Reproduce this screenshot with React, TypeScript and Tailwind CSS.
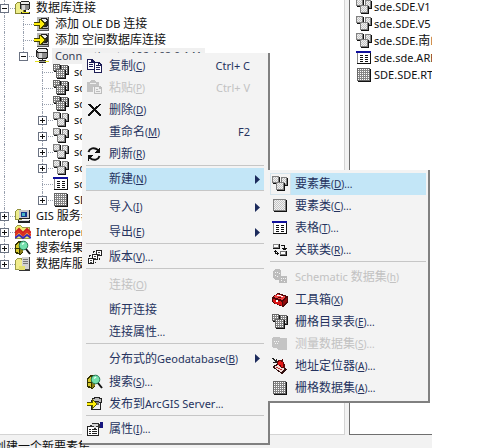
import type { ReactNode } from 'react';

/* ---------- icons ---------- */

function Svg({ children, size = 16 }: { children: ReactNode; size?: number }) {
  return (
    <svg width={size} height={16} viewBox={`0 0 ${size} 16`} shapeRendering="crispEdges" className="shrink-0" aria-hidden="true">
      {children}
    </svg>
  );
}

type TileProps = { x: number; y: number; w: number; h: number; kind: 'hatch' | 'grid' };

function Tile({ x, y, w, h, kind }: TileProps) {
  const dots: ReactNode[] = [];
  for (let r = 1; r < h - 1; r++) {
    for (let c = 1; c < w - 1; c++) {
      const on = kind === 'hatch' ? (r + c) % 2 === 0 : r % 2 === 1 && c % 2 === 1;
      if (on) dots.push(<rect key={`${r}-${c}`} x={x + c} y={y + r} width="1" height="1" fill={kind === 'hatch' ? '#c4c4c4' : '#ffffff'} />);
    }
  }
  return (
    <g>
      <rect x={x + 1} y={y + 1} width={w} height={h} fill="#111" />
      <rect x={x} y={y} width={w} height={h} fill={kind === 'hatch' ? '#808080' : '#666'} />
      <rect x={x + 1} y={y + 1} width={w - 2} height={h - 2} fill={kind === 'hatch' ? '#f1f1f1' : '#858585'} />
      {dots}
    </g>
  );
}

const DatasetIcon = () => (
  <Svg>
    <Tile x={0} y={0} w={7} h={7} kind="hatch" />
    <Tile x={9} y={1} w={6} h={8} kind="hatch" />
    <Tile x={4} y={6} w={8} h={8} kind="hatch" />
  </Svg>
);

const CatalogIcon = () => (
  <Svg>
    <Tile x={0} y={0} w={7} h={7} kind="grid" />
    <Tile x={8} y={1} w={7} h={9} kind="grid" />
    <Tile x={3} y={5} w={9} h={9} kind="grid" />
  </Svg>
);

const RasterIcon = () => (
  <Svg>
    <Tile x={1} y={1} w={13} h={13} kind="grid" />
  </Svg>
);

const FeatureClassIcon = () => (
  <Svg>
    <Tile x={1} y={1} w={13} h={12} kind="hatch" />
  </Svg>
);

const TableIcon = () => (
  <Svg>
    <rect x="1" y="2" width="14" height="12" fill="#111" />
    <rect x="1" y="2" width="13" height="11" fill="#fff" />
    <rect x="1" y="3" width="1" height="10" fill="#888" />
    <rect x="0" y="1" width="15" height="2" fill="#10109c" />
    <path d="M4 5h3v1H4zM4 7h3v1H4zM4 9h3v1H4zM4 11h3v1H4zM9 5h3v1H9zM9 7h3v1H9zM9 9h3v1H9zM9 11h3v1H9z" fill="#111" />
  </Svg>
);

const RelationIcon = () => (
  <Svg>
    <rect x="1" y="2" width="7" height="5" fill="#111" />
    <rect x="1" y="2" width="6" height="4" fill="#888" />
    <rect x="2" y="3" width="4" height="2" fill="#fff" />
    <rect x="8" y="9" width="7" height="5" fill="#111" />
    <rect x="8" y="9" width="6" height="4" fill="#777" />
    <rect x="9" y="10" width="4" height="2" fill="#fff" />
    <path d="M9 3h3v1H9zM12 3h1v4h-1zM10 6h5v1h-5zM11 7h3v1h-3zM3 8h1v4H3zM2 9h3v1H2zM3 11h4v1H3zM5 10h1v3H5z" fill="#111" />
  </Svg>
);

const CopyIcon = () => (
  <Svg>
    <path d="M0 1h5l3 3v8H0z" fill="#1d1d55" />
    <path d="M1 2h3v3h3v6H1z" fill="#fff" />
    <path d="M2 4h2v1H2zM2 6h4v1H2zM2 8h4v1H2z" fill="#1d1d55" />
    <path d="M7 4h5l3 3v8H7z" fill="#1d1d55" />
    <path d="M8 5h3v3h3v6H8zM12 6h1v1h-1z" fill="#fff" />
    <path d="M9 7h2v1H9zM9 9h4v1H9zM9 11h4v1H9z" fill="#1d1d55" />
  </Svg>
);

const PasteIcon = () => (
  <Svg>
    <path d="M0 2h3V1h1V0h4v1h1v1h3v5H6v5H0z" fill="#c3c3c3" />
    <path d="M3 3h6v1H3z" fill="#f0f0f0" />
    <path d="M7 6h6l2 2v6H7z" fill="#bdbdbd" />
    <path d="M8 7h4v2h2v4H8z" fill="#efefef" />
    <path d="M9 9h2v1H9zM9 11h4v1H9z" fill="#bdbdbd" />
  </Svg>
);

const DeleteIcon = () => (
  <Svg>
    <path
      d="M1 2h3v1h1v1h1v1h1v1h1v-1h1V4h2V3h1V2h2v1h-1v1h-1v1h-1v1h-1v1H9v1h1v1h1v1h1v1h1v1h1v2h-2v-1h-1v-1h-1v-1H9v-1H8V9H7v1H6v1H5v1H4v1H3v1H1v-2h1v-1h1v-1h1V9h1V8h1V7H5V6H4V5H3V4H2V3H1z"
      fill="#111"
    />
  </Svg>
);

const RefreshIcon = () => (
  <Svg>
    <g fill="none" stroke="#111" strokeWidth="2" shapeRendering="auto">
      <path d="M1.500 6C2.500 2.500 7 .5 11 4" />
      <path d="M12.500 10C11.500 13.500 7 15.500 3 12" />
    </g>
    <path d="M13 1v6H8v-1h1V5h1V4h1V3h1V2z" fill="#111" />
    <path d="M1 15V9h5v1H5v1H4v1H3v1H2v1z" fill="#111" />
  </Svg>
);

const VersionIcon = () => (
  <Svg>
    {[
      [9, 1],
      [5, 5],
      [1, 9],
    ].map(([x, y]) => (
      <g key={x}>
        <rect x={x} y={y} width="6" height="6" fill="#222" />
        <rect x={x + 1} y={y + 1} width="4" height="4" fill="#fff" />
        <path d={`M${x + 2} ${y + 2}h2v1h-2zM${x + 2} ${y + 4}h2v1h-2z`} fill="#444" />
      </g>
    ))}
    <path d="M6 2h2v1H6zM6 2h1v2H6zM2 6h2v1H2zM2 6h1v2H2zM12 9h1v2h-1zM8 13h1v1H8z" fill="#222" />
  </Svg>
);

const SearchIcon = () => (
  <Svg>
    <path d="M0 4l4-3h4v12l-3 2-5-2z" fill="#333300" />
    <path d="M1 5l3-2v10l-3-1z" fill="#d6c92c" />
    <path d="M5 3h3v9l-3 2z" fill="#8a7f18" />
    <path d="M1 8h7v1H1z" fill="#333300" />
    <g shapeRendering="auto">
      <circle cx="8.500" cy="5.500" r="4.300" fill="#73e0ac" stroke="#267a55" />
      <path d="M7 4.500l2-1.500" stroke="#e8fff4" strokeWidth="1.500" />
      <path d="M11 9l4 5" stroke="#111" strokeWidth="2" />
    </g>
  </Svg>
);

const DatabaseGlyph = () => (
  <g>
    <path d="M4 0h8l2 2v7l-2 2H4L2 9V2z" fill="#222" />
    <path d="M4 1h8l1 2-1 1H4L3 3z" fill="#ededed" />
    <path d="M3 5h9l1-1v4l-1 2H4L3 8z" fill="#8b8b8b" />
    <path d="M5 5h3v5H5z" fill="#d5d5d5" />
  </g>
);

const DatabaseIcon = () => (
  <Svg>
    <DatabaseGlyph />
    <path d="M8 11h1v2H8zM5 12h7v3H5z" fill="#222" />
    <path d="M1 13h14v1H1z" fill="#e2df1f" />
    <path d="M6 13h5v1H6z" fill="#999" />
  </Svg>
);

const AddConnectionIcon = () => (
  <Svg>
    <rect x="3" y="1" width="12" height="14" fill="#555" />
    <rect x="3" y="1" width="11" height="13" fill="#b5b5b5" />
    <path d="M7 2h6l1 2v6l-2 1H8z" fill="#222" />
    <path d="M8 3h4l1 2-2 1H8z" fill="#ededed" />
    <path d="M6 12h8v1H6z" fill="#222" />
    <path d="M0 6h5V3h2l5 5-5 5H5v-3H0z" fill="#444400" />
    <path d="M0 7h6V4l4 4-4 4V9H0z" fill="#ffee08" />
  </Svg>
);

const FolderDatabaseIcon = () => (
  <Svg>
    <path d="M0 4l2-2h5l2 2v10H0z" fill="#8c8c33" />
    <path d="M1 4l2-1h3l2 2v8H1z" fill="#eeee8a" />
    <g transform="translate(3 1) scale(.85)">
      <DatabaseGlyph />
    </g>
    <path d="M9 10h2v3H9zM6 12h9v2H6z" fill="#222" />
    <path d="M7 12h7v1H7z" fill="#e2df1f" />
  </Svg>
);

const GisServerIcon = () => (
  <Svg>
    <path d="M0 3l2-2h4l1 2v9H0z" fill="#92923c" />
    <path d="M1 3l2-1h3v9H1z" fill="#ecec8c" />
    <rect x="4" y="2" width="11" height="9" fill="#222" />
    <rect x="4" y="2" width="10" height="8" fill="#c9c9c9" />
    <rect x="6" y="4" width="6" height="5" fill="#173a8c" />
    <rect x="7" y="5" width="3" height="3" fill="#49b7c7" />
    <path d="M3 12h12v3H3z" fill="#222" />
    <path d="M4 12h10v1H4z" fill="#ddd" />
  </Svg>
);

const InteropIcon = () => (
  <Svg>
    <path d="M0 3l2-2h4l1 2h8v12H0z" fill="#9b9b44" />
    <path d="M1 3l2-1h3l1 2h7v10H1z" fill="#f1ec72" />
    <g fill="none" strokeWidth="2" shapeRendering="auto">
      <path d="M0 9l4-4 4 4 4-4 4 4" stroke="#cf2020" />
      <path d="M0 11.500l4-4 4 4 4-4 4 4" stroke="#e0301d" />
      <path d="M0 14l4-3 4 3 4-3 4 3" stroke="#3b2bb4" />
    </g>
  </Svg>
);

const DatabaseServerIcon = () => (
  <Svg>
    <path d="M0 4l2-2h5l1 2v10H0z" fill="#9b9b44" />
    <path d="M1 4l2-1h3l1 2v8H1z" fill="#f1ec8a" />
    <rect x="7" y="1" width="8" height="13" fill="#444" />
    <rect x="7" y="1" width="7" height="12" fill="#d3d3d3" />
    <path d="M8 3h5v1H8zM8 5h5v1H8zM8 7h5v1H8z" fill="#777" />
    <path d="M4 10h6v4H4z" fill="#e4e070" />
    <path d="M4 14h11v1H4z" fill="#333" />
  </Svg>
);

const PublishIcon = () => (
  <Svg>
    <path d="M5 2h2V1h6v1h2v5h-1v7H4V4h1z" fill="#222" />
    <path d="M6 3h2V2h4v1h2v3h-2V5H6z" fill="#b9b9b9" />
    <path d="M8 7h5v6H6z" fill="#eee" />
    <path d="M9 6h3v3H9z" fill="#777" />
    <path d="M0 6h5V3l6 5-6 5v-3H0z" fill="#555500" />
    <path d="M0 7h6V5l4 3-4 3V9H0z" fill="#ffef08" />
  </Svg>
);

const PropertiesIcon = () => (
  <Svg>
    <rect x="0" y="5" width="12" height="10" fill="#222" />
    <rect x="1" y="6" width="10" height="8" fill="#fff" />
    <path d="M2 8h2v1H2zM5 8h5v1H5zM2 10h2v1H2zM5 10h5v1H5zM2 12h2v1H2zM5 12h5v1H5z" fill="#222" />
    <path d="M3 4h2V2h7v1h1v4h-2V6H9v2H7V6H3z" fill="#333" />
    <path d="M5 3h6v2H5zM7 5h2v2H7z" fill="#d7d7d7" />
    <path d="M13 1h3v6h-3z" fill="#171780" />
  </Svg>
);

const ToolboxIcon = () => (
  <Svg>
    <path d="M0 5l6-4 9 3 1 1v6l-5 4-10-4-1-1z" fill="#4c0808" />
    <path d="M1 5l5-3 8 3-4 3z" fill="#f04040" />
    <path d="M1 7l9 3v4l-8-3-1-1z" fill="#d91414" />
    <path d="M11 9l4-3v4l-4 3z" fill="#8f0a0a" />
    <path d="M5 3h4v1h2v1H9V4H5zM4 8h2v2H4z" fill="#fff" />
    <path d="M6 5h3v1H6z" fill="#5c0808" />
  </Svg>
);

const SchematicIcon = () => (
  <Svg>
    <path d="M1 2l2-2h4l2 2v5h6v7H7v-3H3L1 9z" fill="#bcbcbc" />
    <path d="M3 3h1v1H3zM5 3h1v1H5zM7 4h1v1H7zM3 6h1v1H3zM5 7h1v1H5zM9 9h1v1H9zM11 9h1v1h-1zM13 9h1v1h-1zM9 11h1v1H9zM12 12h1v1h-1z" fill="#f4f4f4" />
  </Svg>
);

const SurveyIcon = () => (
  <Svg>
    <path d="M0 2l1-1h7v1h6l1 1v11H6l-2-2H1l-1-1z" fill="#c4c4c4" />
    <path d="M2 5h1v1H2zM4 5h1v1H4zM6 5h1v1H6zM3 7h1v1H3zM5 7h1v1H5z" fill="#f4f4f4" />
  </Svg>
);

const LocatorIcon = () => (
  <Svg>
    <path d="M0 9l5-3 10 5v1l-5 4z" fill="#321010" />
    <path d="M2 9l4-2 7 4-4 3z" fill="#f3dcd8" />
    <path d="M4 9h2v1h2v1h2v1H8v-1H6v-1H4z" fill="#b33" />
    <path d="M6 2h3l1-1 1 1 1 4 1 1v3h-3L7 8 5 5z" fill="#5c0808" />
    <path d="M7 3h2v1h2v5H9V7H6V4h1z" fill="#e51515" />
    <path d="M0 0h2v1h1v1h1V1h1v4H1V4h2V3H2V2H1V1H0z" fill="#222" />
  </Svg>
);

/* ---------- text ---------- */

/* Han characters are set one size up from the Latin ones around them. */
function Mixed({ text }: { text: string }) {
  const runs = text.match(/[\u4e00-\u9fff]+|[^\u4e00-\u9fff]+/g) ?? [];
  return (
    <>
      {runs.map((run, i) => (
        <span key={i} className={/[\u4e00-\u9fff]/.test(run) ? 'text-[12px]' : 'text-[11px]'}>
          {run}
        </span>
      ))}
    </>
  );
}

/* ---------- tree ---------- */

type TreeRow = { level: 0 | 1 | 2; icon: ReactNode; text: string; state?: 'open' | 'closed'; last?: boolean; rails: boolean[] };

const treeRows: TreeRow[] = [
  { level: 0, icon: <FolderDatabaseIcon />, text: '数据库连接', state: 'open', rails: [] },
  { level: 1, icon: <AddConnectionIcon />, text: '添加 OLE DB 连接', rails: [true] },
  { level: 1, icon: <AddConnectionIcon />, text: '添加 空间数据库连接', rails: [true] },
  { level: 1, icon: <DatabaseIcon />, text: 'Connection to 192.168.0.141', state: 'open', last: true, rails: [true] },
  { level: 2, icon: <CatalogIcon />, text: 'sde.SDE.DEM', rails: [true, false] },
  { level: 2, icon: <CatalogIcon />, text: 'sde.SDE.DOM', rails: [true, false] },
  { level: 2, icon: <CatalogIcon />, text: 'sde.SDE.RC', rails: [true, false] },
  { level: 2, icon: <DatasetIcon />, text: 'sde.SDE.V1', state: 'closed', rails: [true, false] },
  { level: 2, icon: <DatasetIcon />, text: 'sde.SDE.V5', state: 'closed', rails: [true, false] },
  { level: 2, icon: <DatasetIcon />, text: 'sde.SDE.V6', state: 'closed', rails: [true, false] },
  { level: 2, icon: <DatasetIcon />, text: 'sde.SDE.南山', state: 'closed', rails: [true, false] },
  { level: 2, icon: <TableIcon />, text: 'sde.sde.AREA', rails: [true, false] },
  { level: 2, icon: <RasterIcon />, text: 'SDE.SDE.RT', state: 'closed', last: true, rails: [true, false] },
  { level: 0, icon: <GisServerIcon />, text: 'GIS 服务器', state: 'closed', rails: [] },
  { level: 0, icon: <InteropIcon />, text: 'Interoperability', state: 'closed', rails: [] },
  { level: 0, icon: <SearchIcon />, text: '搜索结果', state: 'closed', rails: [] },
  { level: 0, icon: <DatabaseServerIcon />, text: '数据库服务器', state: 'closed', last: true, rails: [] },
];

function TreeItem({ row }: { row: TreeRow }) {
  const selected = row.text.startsWith('Connection');
  return (
    <li role="treeitem" aria-level={row.level + 1} aria-selected={selected} className="flex h-4 items-center whitespace-nowrap">
      {row.rails.map((on, i) => (
        <span key={i} className="h-4 w-[19px] shrink-0 pl-1">
          <span className={on ? 'block h-4 border-l border-dotted border-gray-400' : 'block h-4'} />
        </span>
      ))}
      <span className="relative h-4 w-[15px] shrink-0">
        <span className={`absolute left-1 top-0 border-l border-dotted border-gray-400 ${row.last ? 'h-2' : 'h-4'}`} />
        <span className="absolute left-1 right-0 top-2 border-t border-dotted border-gray-400" />
        {row.state && (
          <button
            type="button"
            aria-label={row.state === 'open' ? '折叠' : '展开'}
            className="absolute left-0 top-1 flex size-[9px] items-center justify-center border border-gray-500 bg-white"
          >
            <svg width="5" height="5" viewBox="0 0 5 5" className="shrink-0" shapeRendering="crispEdges" aria-hidden="true">
              <path d={row.state === 'open' ? 'M0 2h5v1H0z' : 'M0 2h5v1H0zM2 0h1v5H2z'} fill="#111" />
            </svg>
          </button>
        )}
      </span>
      {row.icon}
      <span className={`ml-0.5 px-[3px] leading-4 ${selected ? 'bg-[#f0f0f0] text-gray-700' : ''}`}>
        <Mixed text={row.text} />
      </span>
    </li>
  );
}

/* ---------- menus ---------- */

type Entry = {
  text: string;
  hotkey?: string;
  dots?: boolean;
  icon?: ReactNode;
  shortcut?: string;
  arrow?: boolean;
  disabled?: boolean;
  active?: boolean;
  size?: 'tall' | 'taller';
};

function MenuItem({ entry, inset }: { entry: Entry; inset?: boolean }) {
  const tone = entry.disabled ? 'text-[#c2c2c2]' : 'text-[#26335f]';
  const height = entry.size === 'taller' ? 'h-7' : entry.size === 'tall' ? 'h-[25px]' : 'h-[22px]';
  return (
    <li role="none">
      <button
        type="button"
        role="menuitem"
        disabled={entry.disabled}
        aria-haspopup={entry.arrow ? 'menu' : undefined}
        className={`flex w-full items-center whitespace-nowrap pr-1 text-left leading-4 ${height} ${tone} ${entry.active ? 'bg-[#c3e6f7]' : ''}`}
      >
        <span className={`flex h-full shrink-0 items-center ${inset ? 'w-[25px] pl-0.5' : 'w-[23px] pl-px'}`}>
          <span className={entry.active && entry.icon ? '-ml-0.5 flex h-full w-[21px] shrink-0 items-center border border-[#d5e4ec] bg-[#f3f3f3] pl-px' : 'flex'}>
            {entry.icon}
          </span>
        </span>
        <span className="flex-1">
          <Mixed text={entry.text} />
          {entry.hotkey && (
            <span className="text-[10px]">
              (<u>{entry.hotkey}</u>)
            </span>
          )}
          {entry.dots && <span className="text-[10px]">...</span>}
        </span>
        {entry.shortcut && <span className="pr-2.5 text-[11px]">{entry.shortcut}</span>}
        {entry.arrow && (
          <svg width="5" height="9" viewBox="0 0 5 9" aria-hidden="true">
            <path d="M0 0l5 4.500L0 9z" fill="#1c2b5c" />
          </svg>
        )}
      </button>
    </li>
  );
}

function MenuGroups({ groups, inset }: { groups: Entry[][]; inset?: boolean }) {
  return (
    <>
      {groups.map((group, i) => (
        <ul key={i} role="group" className={i > 0 ? 'border-t border-[#c6c6c6] pt-0.5' : ''}>
          {group.map((entry) => (
            <MenuItem key={entry.text} entry={entry} inset={inset} />
          ))}
        </ul>
      ))}
    </>
  );
}

const contextGroups: Entry[][] = [
  [
    { text: '复制', hotkey: 'C', icon: <CopyIcon />, shortcut: 'Ctrl+ C' },
    { text: '粘贴', hotkey: 'P', icon: <PasteIcon />, shortcut: 'Ctrl+ V', disabled: true },
    { text: '删除', hotkey: 'D', icon: <DeleteIcon /> },
    { text: '重命名', hotkey: 'M', shortcut: 'F2' },
    { text: '刷新', hotkey: 'R', icon: <RefreshIcon /> },
  ],
  [{ text: '新建', hotkey: 'N', arrow: true, active: true }],
  [
    { text: '导入', hotkey: 'I', arrow: true, size: 'taller' },
    { text: '导出', hotkey: 'E', arrow: true },
  ],
  [{ text: '版本', hotkey: 'V', dots: true, icon: <VersionIcon /> }],
  [
    { text: '连接', hotkey: 'O', disabled: true, size: 'taller' },
    { text: '断开连接' },
    { text: '连接属性', dots: true },
  ],
  [
    { text: '分布式的Geodatabase', hotkey: 'B', arrow: true, size: 'tall' },
    { text: '搜索', hotkey: 'S', dots: true, icon: <SearchIcon /> },
    { text: '发布到ArcGIS Server', dots: true, icon: <PublishIcon /> },
  ],
  [{ text: '属性', hotkey: 'I', dots: true, icon: <PropertiesIcon /> }],
];

const newGroups: Entry[][] = [
  [
    { text: '要素集', hotkey: 'D', dots: true, icon: <DatasetIcon />, active: true },
    { text: '要素类', hotkey: 'C', dots: true, icon: <FeatureClassIcon /> },
    { text: '表格', hotkey: 'T', dots: true, icon: <TableIcon /> },
    { text: '关联类', hotkey: 'R', dots: true, icon: <RelationIcon /> },
  ],
  [
    { text: 'Schematic 数据集', hotkey: 'h', icon: <SchematicIcon />, disabled: true, size: 'tall' },
    { text: '工具箱', hotkey: 'X', icon: <ToolboxIcon /> },
    { text: '栅格目录表', hotkey: 'E', dots: true, icon: <CatalogIcon /> },
    { text: '测量数据集', hotkey: 'S', dots: true, icon: <SurveyIcon />, disabled: true },
    { text: '地址定位器', hotkey: 'A', dots: true, icon: <LocatorIcon /> },
    { text: '栅格数据集', hotkey: 'A', dots: true, icon: <RasterIcon /> },
  ],
];

/* ---------- page ---------- */

const listRows = [
  { icon: <DatasetIcon />, text: 'sde.SDE.V1' },
  { icon: <DatasetIcon />, text: 'sde.SDE.V5' },
  { icon: <DatasetIcon />, text: 'sde.SDE.南山' },
  { icon: <TableIcon />, text: 'sde.sde.AREA' },
  { icon: <RasterIcon />, text: 'SDE.SDE.RT' },
];

export default function App() {
  return (
    <div className="relative h-screen overflow-hidden bg-white pr-[45px] font-['Noto_Sans','Noto_Sans_CJK_SC',sans-serif] text-[12px] text-[#111]">
      <div className="flex h-full flex-col bg-[#f2f2f2]">
        <div className="flex min-h-0 flex-1">
          <nav className="min-w-0 flex-1 overflow-hidden border-b border-r border-[#d4d4d4] bg-white">
            <ul role="tree">
              {treeRows.map((row, i) => (
                <TreeItem key={i} row={row} />
              ))}
            </ul>
          </nav>
          <main className="ml-1 w-[83px] shrink-0 overflow-hidden border-b border-l border-[#6f6f6f] bg-white pl-1.5">
            <ul className="-mt-0.5">
              {listRows.map((row) => (
                <li key={row.text} className="flex h-[17px] items-center gap-0.5 whitespace-nowrap leading-4">
                  {row.icon}
                  <span>
                    <Mixed text={row.text} />
                  </span>
                </li>
              ))}
            </ul>
          </main>
        </div>
        <footer className="h-[13px] shrink-0 overflow-hidden pt-1">
          <p className="-ml-1.5 leading-4">创建一个新要素集</p>
        </footer>
      </div>

      <div role="menu" className="absolute left-[82px] top-[53px] w-[188px] border-b-2 border-r-2 border-[#808080] bg-[#f3f3f3] pb-[3px] pl-1 pr-1 pt-0.5">
        <MenuGroups groups={contextGroups} />
      </div>
      <div role="menu" className="absolute left-[268px] top-[170px] w-[162px] border-b-2 border-r-2 border-[#808080] bg-[#f3f3f3] pb-0.5 pl-0.5 pr-0.5 pt-[3px]">
        <MenuGroups groups={newGroups} inset />
      </div>
    </div>
  );
}
